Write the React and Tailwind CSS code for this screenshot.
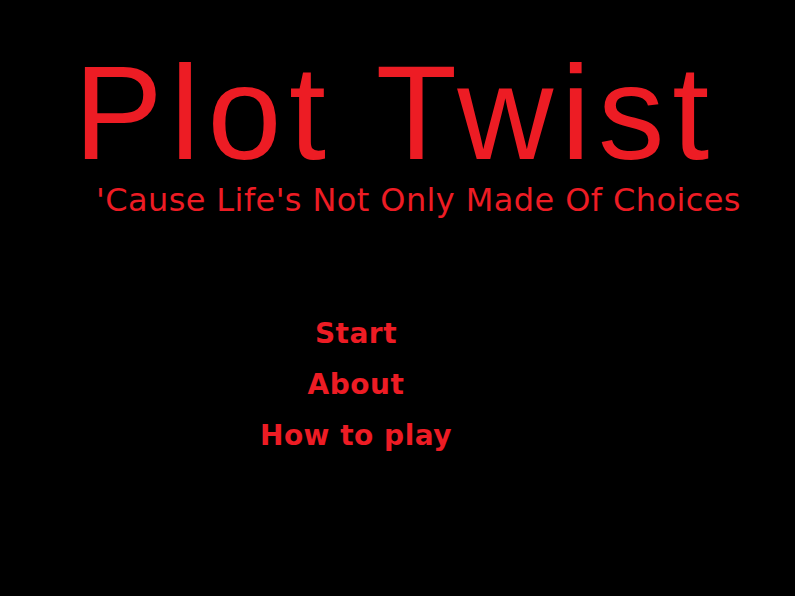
export default function App() {
  const menu = ["Start", "About", "How to play"];
  return (
    <div className="w-[795px] h-[596px] bg-black text-[#ed1c24] font-['Liberation_Sans',sans-serif] overflow-hidden">
      <div className="pl-[74px] pt-[47px]">
        <h1 className="text-[133px] leading-[133px] font-normal tracking-[7.6px]">Plot Twist</h1>
      </div>
      <p className="pl-[96px] mt-[2px] text-[32px] leading-[36px] tracking-[0.4px] font-['DejaVu_Sans','Liberation_Sans',sans-serif]">'Cause Life's Not Only Made Of Choices</p>
      <div className="mt-[100px] flex flex-col items-center w-[712px] gap-[19px]">
        {menu.map((m) => (
          <button key={m} className="text-[28px] leading-[32px] font-bold tracking-[0.5px] font-['DejaVu_Sans','Liberation_Sans',sans-serif] cursor-pointer">{m}</button>
        ))}
      </div>
    </div>
  );
}
